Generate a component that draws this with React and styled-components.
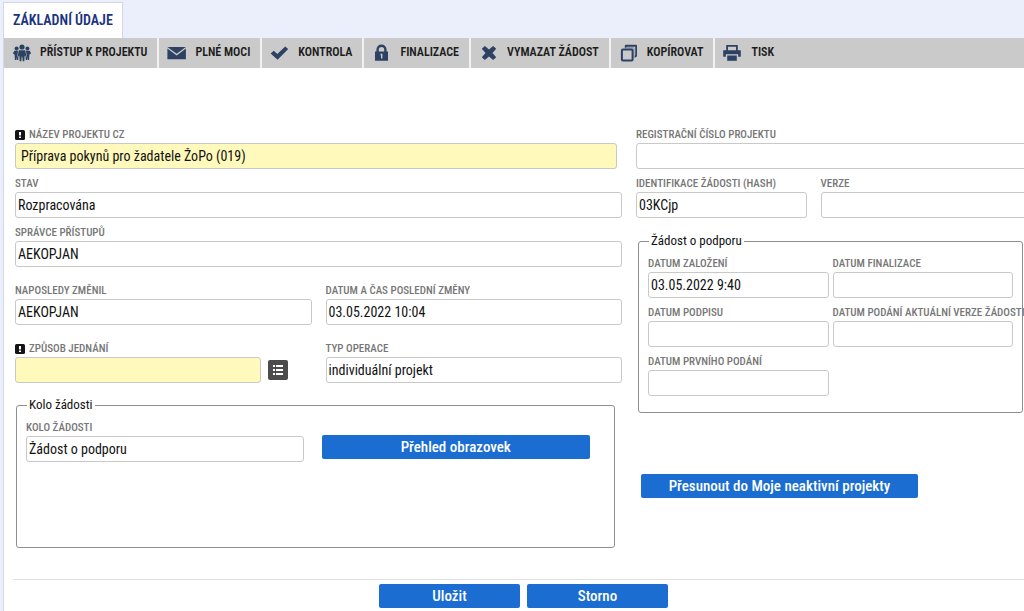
import React, { useId } from "react";
import styled, { createGlobalStyle } from "styled-components";

const GlobalStyle = createGlobalStyle`
  * {
    box-sizing: border-box;
  }

  body {
    margin: 0;
    background-color: #ebeffb;
    color: #111;
    font-family: "Roboto Condensed", "Liberation Sans Narrow", Roboto, sans-serif;
    overflow-x: hidden;
  }

  button,
  input {
    font-family: inherit;
  }
`;

const Page = styled.div`
  display: flex;
  flex-direction: column;
  min-height: 100vh;
  padding: 2px 0 0 3px;
`;

const TabBar = styled.nav`
  display: flex;
`;

const Tab = styled.a`
  height: 36px;
  padding: 0 9px;
  border: 1px solid #d3d7e4;
  border-bottom: 0;
  background-color: #fff;
  color: #1a3480;
  font-size: 14px;
  font-weight: 600;
  line-height: 35px;
  text-decoration: none;
  text-transform: uppercase;
`;

const Panel = styled.main`
  flex: 1;
  display: flex;
  flex-direction: column;
  border-left: 1px solid #d3d7e4;
  background-color: #fff;
`;

const Toolbar = styled.div`
  display: flex;
  height: 30px;
  background-color: #cacaca;
`;

const ToolButton = styled.button`
  display: flex;
  align-items: center;
  gap: 8px;
  padding: 0 10px 2px 8px;
  border: 0;
  border-right: ${(props) => (props.$last ? "0" : "2px solid #f1f1f1")};
  background: none;
  color: #1c1c1c;
  font-size: 12px;
  font-weight: 600;
  text-transform: uppercase;
  white-space: nowrap;

  svg {
    flex: none;
    margin-top: 2px;
  }
`;

const Form = styled.form`
  flex: 1;
  display: flex;
  flex-direction: column;
`;

const Columns = styled.div`
  display: grid;
  grid-template-columns: minmax(0, 607fr) minmax(0, 388fr);
  column-gap: 14px;
  padding: 59px 0 31px 11px;
  overflow: hidden;
`;

const Column = styled.div`
  display: flex;
  flex-direction: column;
  gap: ${(props) => props.$gap}px;
`;

const FieldStack = styled.div`
  display: flex;
  flex-direction: column;
  gap: 7px;
`;

const FieldRow = styled.div`
  display: grid;
  grid-template-columns: ${(props) => props.$columns || "1fr 1fr"};
  gap: 7px ${(props) => props.$gap}px;
`;

// runs past the right edge of the window
const WideArea = styled(FieldStack)`
  margin-right: -12px;
`;

const FieldBox = styled.div`
  min-width: 0;
`;

const Label = styled.label`
  display: flex;
  align-items: center;
  gap: 4px;
  height: 16px;
  color: #777;
  font-size: 11px;
  font-weight: 500;
  line-height: 14px;
  text-transform: uppercase;
  white-space: nowrap;
`;

const Required = styled.svg`
  flex: none;
  width: 10px;
  height: 10px;
`;

const InputLine = styled.div`
  display: flex;
  align-items: center;
  gap: 7px;
`;

const Input = styled.input`
  flex: 1;
  min-width: 0;
  height: 26px;
  padding: 0 ${(props) => (props.$indent ? 5 : 2)}px;
  border: 1px solid #c9c9c9;
  border-radius: 3px;
  background-color: ${(props) => (props.$required ? "#fffabb" : "#fff")};
  color: #111;
  font-size: 14px;
`;

const NameArea = styled.div`
  margin-right: 5px;
`;

const ListButton = styled.button`
  display: flex;
  align-items: center;
  justify-content: center;
  width: 20px;
  height: 20px;
  padding: 0;
  border: 0;
  border-radius: 2px;
  background-color: #4c4c4c;
`;

const PickerArea = styled.div`
  padding-right: 24px;
`;

const Group = styled.fieldset`
  min-width: 0;
  min-height: ${(props) => props.$height || 0}px;
  margin: ${(props) => props.$margin};
  padding: 6px 9px 16px;
  border: 1px solid #8e8e8e;
  border-radius: 3px;
`;

const GroupTitle = styled.legend`
  margin-left: 1px;
  padding: 0 2px;
  font-size: 13px;
  line-height: 18px;
`;

const RoundRow = styled.div`
  display: grid;
  grid-template-columns: 277fr 268fr;
  gap: 18px;
  align-items: end;
  padding-right: 15px;
`;

const Button = styled.button`
  width: ${(props) => props.$width || "100%"};
  height: 24px;
  padding: 0 8px;
  border: 0;
  border-radius: 2px;
  background-color: #1b6dd1;
  color: #fff;
  font-size: 15px;
  font-weight: 500;
  line-height: 24px;
  white-space: nowrap;
`;

const OverviewArea = styled.div`
  padding-bottom: 3px;
`;

const MoveArea = styled.div`
  padding: 47px 0 0 5px;
`;

const Footer = styled.footer`
  display: flex;
  justify-content: center;
  gap: 7px;
  margin-left: 9px;
  padding: 4px 0 3px 10px;
  border-top: 1px solid #e2e2e6;
`;

const ICONS = {
  people: (
    <>
      <circle cx="10" cy="4" r="2.6" />
      <circle cx="4.6" cy="5.4" r="2" />
      <circle cx="15.4" cy="5.4" r="2" />
      <path d="M6.8 7.2h6.4l1.2 6-1.4.4-.3-1.4-.4 6h-1.6l-.4-4.4h-.6l-.4 4.400H7.700l-.4-6-.3 1.400-1.400-.4z" />
      <path d="M2.2 7.8h3.9l-.9 5.5 1.2.8-.2 2.9H4.9l-.3-3.2-.3 3.200H2.900l-.3-5.600-1.700-.9zM17.800 7.800h-3.900l.9 5.500-1.200.8.2 2.900h1.300l.3-3.200.3 3.200h1.400l.3-5.600 1.700-.9z" />
    </>
  ),
  mail: (
    <>
      <path d="M.4 4h18.500L9.650 10.800z" />
      <path d="M.4 5.400l9.250 7.100 9.250-7.100v10.900H.4z" />
    </>
  ),
  check: <path d="M.6 10.600 3.800 7.700l3.500 3.400L15.200 3.500l3 2.600L7.600 16.700z" />,
  lock: (
    <path
      fillRule="evenodd"
      d="M4.400 8.400V6.600a5.100 5.100 0 0 1 10.200 0v1.800h1.400v9.400H3V8.400zm2.400 0h5.400V6.600a2.700 2.700 0 0 0-5.400 0zm1.700 2.400v1.400l.5.4v2.800h1.400v-4.600z"
    />
  ),
  cross: (
    <path d="M2.800 5.800 5.900 3 10 6.500 14.100 3 17.200 5.800 13.500 10 17.200 14.200 14.100 17 10 13.500 5.900 17 2.800 14.200 6.500 10z" />
  ),
  copy: (
    <>
      <rect x="2.900" y="6.400" width="10.700" height="11" rx="1" fill="none" stroke="currentColor" strokeWidth="2" />
      <path d="M5.800 4.400V2.700q0-1 1-1h10.200q1 0 1 1v10.600L15.600 15v-2l.7-.8V3.700H7.800l-.7.7z" />
      <path d="M5.800 3.700h9v1.700h-9zM14.600 5h1v8.500h-1z" opacity=".35" />
    </>
  ),
  print: (
    <>
      <path
        fillRule="evenodd"
        d="M3.200 2h11.600v5.200h3v6.600h-2.600v-2.600H2.800v2.600H.2V7.200h3zM5 3.800v3.400h8V3.800z"
      />
      <path d="M4.200 12.500h9.600v5.300H4.200z" />
    </>
  ),
};

const TOOLS = [
  { icon: "people", text: "Přístup k projektu" },
  { icon: "mail", text: "Plné moci" },
  { icon: "check", text: "Kontrola" },
  { icon: "lock", text: "Finalizace" },
  { icon: "cross", text: "Vymazat žádost" },
  { icon: "copy", text: "Kopírovat" },
  { icon: "print", text: "Tisk" },
];

function ToolIcon({ name }) {
  return (
    <svg width="20" height="20" viewBox="0 0 20 20" fill="currentColor" color="#2d4263" aria-hidden="true">
      {ICONS[name]}
    </svg>
  );
}

function Field({ label, value = "", required, indent, children }) {
  const id = useId();
  return (
    <FieldBox>
      <Label htmlFor={id}>
        {required && (
          <Required viewBox="0 0 10 10" aria-hidden="true">
            <rect width="10" height="10" rx="1.5" fill="#151515" />
            <path d="M4 2h2v3.5H4zM4 6.500h2v1.500H4z" fill="#fff" />
          </Required>
        )}
        {label}
      </Label>
      <InputLine>
        <Input
          id={id}
          type="text"
          defaultValue={value}
          required={required}
          $required={required}
          $indent={indent}
        />
        {children}
      </InputLine>
    </FieldBox>
  );
}

export default function App() {
  return (
    <>
      <GlobalStyle />
      <Page>
        <TabBar>
          <Tab href="#zakladni-udaje">Základní údaje</Tab>
        </TabBar>
        <Panel>
          <Toolbar>
            {TOOLS.map((tool, i) => (
              <ToolButton key={tool.icon} type="button" $last={i === TOOLS.length - 1}>
                <ToolIcon name={tool.icon} />
                {tool.text}
              </ToolButton>
            ))}
          </Toolbar>

          <Form onSubmit={(e) => e.preventDefault()} noValidate>
            <Columns>
              <Column $gap={16}>
                <FieldStack>
                  <NameArea>
                    <Field
                      label="Název projektu CZ"
                      value="Příprava pokynů pro žadatele ŽoPo (019)"
                      required
                      indent
                    />
                  </NameArea>
                  <Field label="Stav" value="Rozpracována" />
                  <Field label="Správce přístupů" value="AEKOPJAN" />
                </FieldStack>
                <FieldRow $gap={14}>
                  <Field label="Naposledy změnil" value="AEKOPJAN" />
                  <Field label="Datum a čas poslední změny" value="03.05.2022 10:04" />
                </FieldRow>
                <FieldRow $gap={14}>
                  <PickerArea>
                    <Field label="Způsob jednání" required>
                      <ListButton type="button" aria-label="Vybrat">
                        <svg width="12" height="12" viewBox="0 0 12 12" fill="#fff" aria-hidden="true">
                          <path d="M1 1h2v2H1zM4 1h7v2H4zM1 5h2v2H1zM4 5h7v2H4zM1 9h2v2H1zM4 9h7v2H4z" />
                        </svg>
                      </ListButton>
                    </Field>
                  </PickerArea>
                  <Field label="Typ operace" value="individuální projekt" />
                </FieldRow>
                <Group $margin="-3px 7px 0 1px" $height={152}>
                  <GroupTitle>Kolo žádosti</GroupTitle>
                  <RoundRow>
                    <Field label="Kolo žádosti" value="Žádost o podporu" />
                    <OverviewArea>
                      <Button type="button">Přehled obrazovek</Button>
                    </OverviewArea>
                  </RoundRow>
                </Group>
              </Column>

              <Column $gap={14}>
                <WideArea>
                  <Field label="Registrační číslo projektu" />
                  <FieldRow $columns="171fr 216fr" $gap={14}>
                    <Field label="Identifikace žádosti (hash)" value="03KCjp" />
                    <Field label="Verze" />
                  </FieldRow>
                </WideArea>
                <Group $margin="0 1px 0 2px">
                  <GroupTitle>Žádost o podporu</GroupTitle>
                  <FieldRow $gap={4}>
                    <Field label="Datum založení" value="03.05.2022 9:40" />
                    <Field label="Datum finalizace" />
                    <Field label="Datum podpisu" />
                    <Field label="Datum podání aktuální verze žádosti" />
                    <Field label="Datum prvního podání" />
                  </FieldRow>
                </Group>
                <MoveArea>
                  <Button type="button" $width="277px">
                    Přesunout do Moje neaktivní projekty
                  </Button>
                </MoveArea>
              </Column>
            </Columns>

            <Footer>
              <Button type="submit" $width="141px">
                Uložit
              </Button>
              <Button type="reset" $width="141px">
                Storno
              </Button>
            </Footer>
          </Form>
        </Panel>
      </Page>
    </>
  );
}
